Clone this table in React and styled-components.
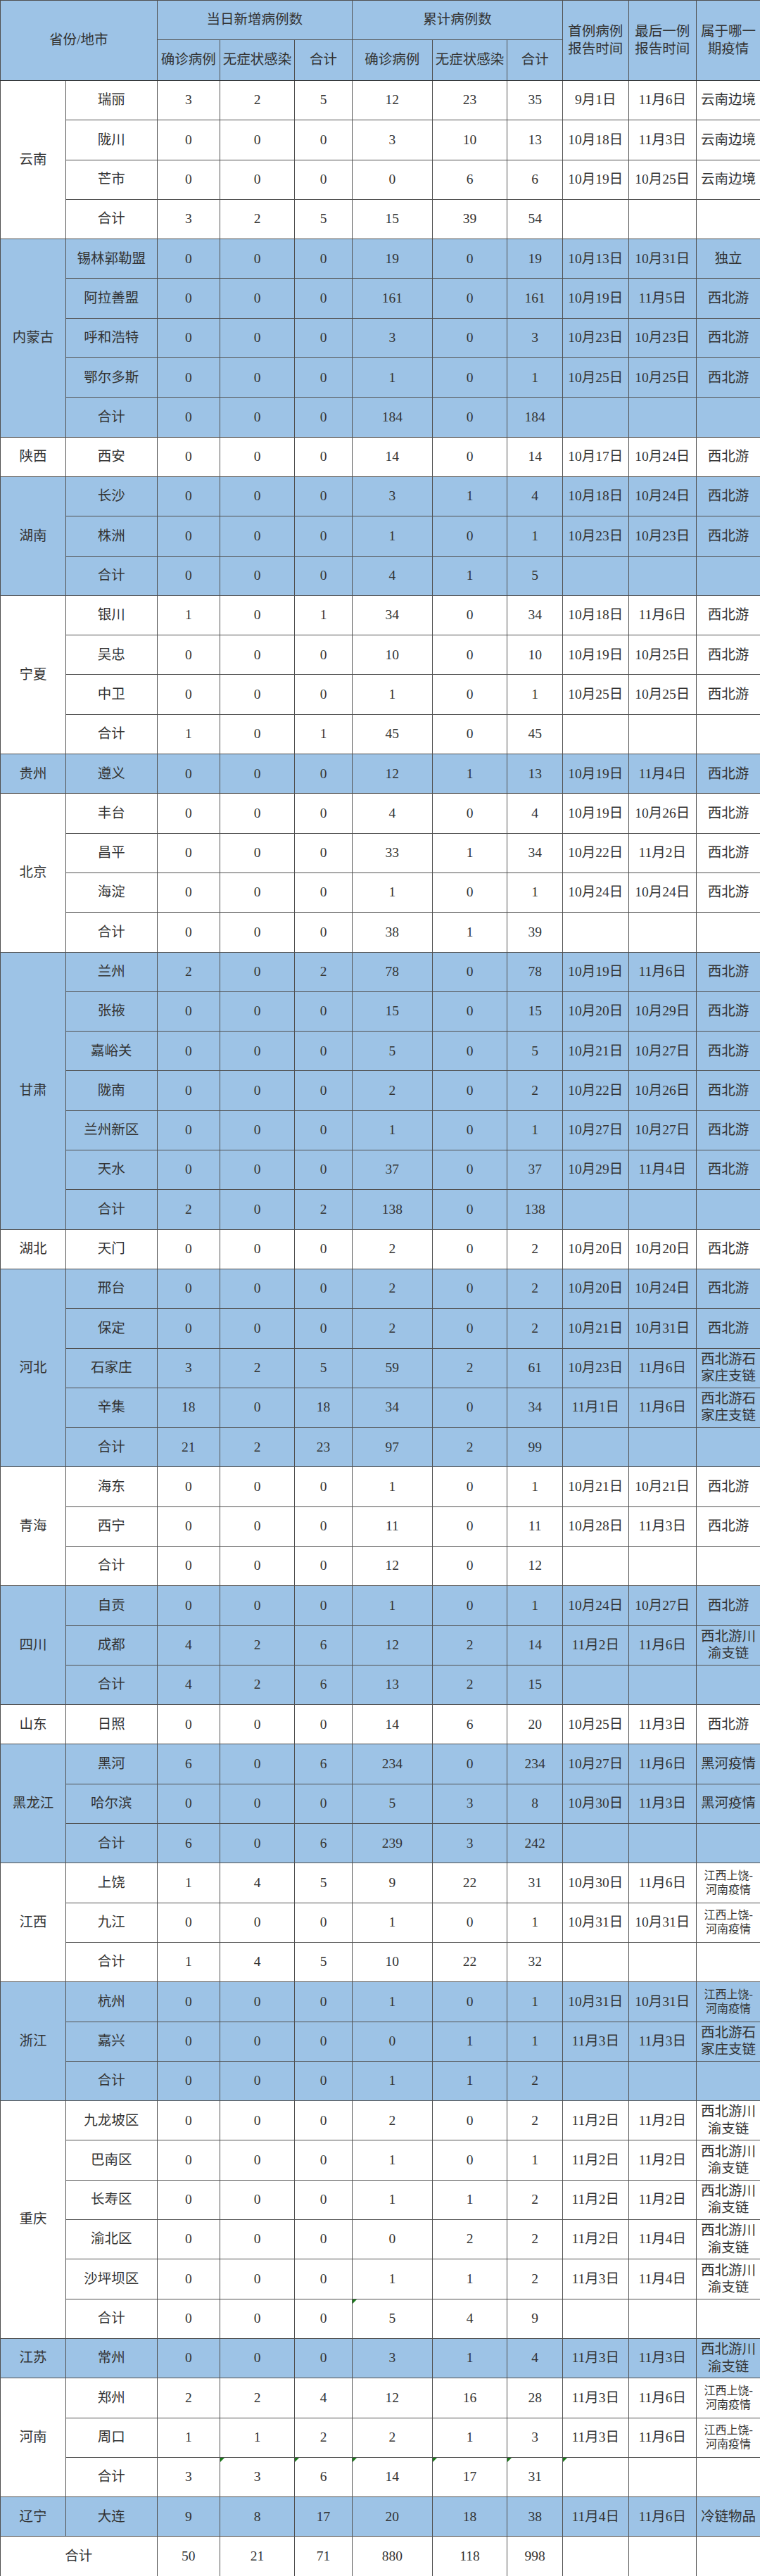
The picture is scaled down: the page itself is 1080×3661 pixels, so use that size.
import React from "react"
import styled, { createGlobalStyle } from "styled-components"

const BLUE = "#9dc3e6"
const LINE = "#505050"
const EDGE = "#2e2e2e"

const GlobalStyle = createGlobalStyle`
    html, body{
        margin: 0;
        padding: 0;
        background: #ffffff;
    }
    body{
        font-family: "Liberation Serif", "Noto Sans CJK SC", serif;
        color: #333333;
    }
`

const Sheet = styled.table`
    width: 1080px;
    table-layout: fixed;
    border-collapse: collapse;
    font-size: 19.5px;
`

const HeadRow = styled.tr`
    height: ${p => p.$h}px;
`

const HeadCell = styled.th`
    background: ${BLUE};
    font-weight: normal;
    border: 1px solid ${LINE};
    border-bottom-color: ${p => p.$last ? EDGE : LINE};
    padding: 0 3px;
    line-height: 1.25;
    text-align: center;
    vertical-align: middle;
`

const Row = styled.tr`
    height: 56.3px;
    background: ${p => p.$tint ? BLUE : "#ffffff"};
`

const Cell = styled.td`
    position: relative;
    border: 1px solid ${LINE};
    border-top-color: ${p => p.$first ? EDGE : LINE};
    padding: 0 3px;
    text-align: center;
    vertical-align: middle;
    line-height: 1.25;
    white-space: pre-line;
    font-size: ${p => p.$small ? "16px" : "inherit"};

    /* Excel style green corner marker */
    &::before{
        content: "";
        display: ${p => p.$flag ? "block" : "none"};
        position: absolute;
        left: 0;
        top: 0;
        border-top: 6px solid #1b7a1b;
        border-right: 6px solid transparent;
    }
`

const widths = [93, 129.5, 89.5, 106, 82, 113.6, 106.8, 78.5, 93.7, 96.4, 91]

const W = "西北游"
const SJZ = "西北游石\n家庄支链"
const CY = "西北游川\n渝支链"
const JX = "江西上饶-\n河南疫情"
const YN = "云南边境"
const HH = "黑河疫情"

const groups = [
    { province: "云南", rows: [
        ["瑞丽", 3, 2, 5, 12, 23, 35, "9月1日", "11月6日", YN],
        ["陇川", 0, 0, 0, 3, 10, 13, "10月18日", "11月3日", YN],
        ["芒市", 0, 0, 0, 0, 6, 6, "10月19日", "10月25日", YN],
        ["合计", 3, 2, 5, 15, 39, 54],
    ]},
    { province: "内蒙古", rows: [
        ["锡林郭勒盟", 0, 0, 0, 19, 0, 19, "10月13日", "10月31日", "独立"],
        ["阿拉善盟", 0, 0, 0, 161, 0, 161, "10月19日", "11月5日", W],
        ["呼和浩特", 0, 0, 0, 3, 0, 3, "10月23日", "10月23日", W],
        ["鄂尔多斯", 0, 0, 0, 1, 0, 1, "10月25日", "10月25日", W],
        ["合计", 0, 0, 0, 184, 0, 184],
    ]},
    { province: "陕西", rows: [
        ["西安", 0, 0, 0, 14, 0, 14, "10月17日", "10月24日", W],
    ]},
    { province: "湖南", rows: [
        ["长沙", 0, 0, 0, 3, 1, 4, "10月18日", "10月24日", W],
        ["株洲", 0, 0, 0, 1, 0, 1, "10月23日", "10月23日", W],
        ["合计", 0, 0, 0, 4, 1, 5],
    ]},
    { province: "宁夏", rows: [
        ["银川", 1, 0, 1, 34, 0, 34, "10月18日", "11月6日", W],
        ["吴忠", 0, 0, 0, 10, 0, 10, "10月19日", "10月25日", W],
        ["中卫", 0, 0, 0, 1, 0, 1, "10月25日", "10月25日", W],
        ["合计", 1, 0, 1, 45, 0, 45],
    ]},
    { province: "贵州", rows: [
        ["遵义", 0, 0, 0, 12, 1, 13, "10月19日", "11月4日", W],
    ]},
    { province: "北京", rows: [
        ["丰台", 0, 0, 0, 4, 0, 4, "10月19日", "10月26日", W],
        ["昌平", 0, 0, 0, 33, 1, 34, "10月22日", "11月2日", W],
        ["海淀", 0, 0, 0, 1, 0, 1, "10月24日", "10月24日", W],
        ["合计", 0, 0, 0, 38, 1, 39],
    ]},
    { province: "甘肃", rows: [
        ["兰州", 2, 0, 2, 78, 0, 78, "10月19日", "11月6日", W],
        ["张掖", 0, 0, 0, 15, 0, 15, "10月20日", "10月29日", W],
        ["嘉峪关", 0, 0, 0, 5, 0, 5, "10月21日", "10月27日", W],
        ["陇南", 0, 0, 0, 2, 0, 2, "10月22日", "10月26日", W],
        ["兰州新区", 0, 0, 0, 1, 0, 1, "10月27日", "10月27日", W],
        ["天水", 0, 0, 0, 37, 0, 37, "10月29日", "11月4日", W],
        ["合计", 2, 0, 2, 138, 0, 138],
    ]},
    { province: "湖北", rows: [
        ["天门", 0, 0, 0, 2, 0, 2, "10月20日", "10月20日", W],
    ]},
    { province: "河北", rows: [
        ["邢台", 0, 0, 0, 2, 0, 2, "10月20日", "10月24日", W],
        ["保定", 0, 0, 0, 2, 0, 2, "10月21日", "10月31日", W],
        ["石家庄", 3, 2, 5, 59, 2, 61, "10月23日", "11月6日", SJZ],
        ["辛集", 18, 0, 18, 34, 0, 34, "11月1日", "11月6日", SJZ],
        ["合计", 21, 2, 23, 97, 2, 99],
    ]},
    { province: "青海", rows: [
        ["海东", 0, 0, 0, 1, 0, 1, "10月21日", "10月21日", W],
        ["西宁", 0, 0, 0, 11, 0, 11, "10月28日", "11月3日", W],
        ["合计", 0, 0, 0, 12, 0, 12],
    ]},
    { province: "四川", rows: [
        ["自贡", 0, 0, 0, 1, 0, 1, "10月24日", "10月27日", W],
        ["成都", 4, 2, 6, 12, 2, 14, "11月2日", "11月6日", CY],
        ["合计", 4, 2, 6, 13, 2, 15],
    ]},
    { province: "山东", rows: [
        ["日照", 0, 0, 0, 14, 6, 20, "10月25日", "11月3日", W],
    ]},
    { province: "黑龙江", rows: [
        ["黑河", 6, 0, 6, 234, 0, 234, "10月27日", "11月6日", HH],
        ["哈尔滨", 0, 0, 0, 5, 3, 8, "10月30日", "11月3日", HH],
        ["合计", 6, 0, 6, 239, 3, 242],
    ]},
    { province: "江西", rows: [
        ["上饶", 1, 4, 5, 9, 22, 31, "10月30日", "11月6日", JX],
        ["九江", 0, 0, 0, 1, 0, 1, "10月31日", "10月31日", JX],
        ["合计", 1, 4, 5, 10, 22, 32],
    ]},
    { province: "浙江", rows: [
        ["杭州", 0, 0, 0, 1, 0, 1, "10月31日", "10月31日", JX],
        ["嘉兴", 0, 0, 0, 0, 1, 1, "11月3日", "11月3日", SJZ],
        ["合计", 0, 0, 0, 1, 1, 2],
    ]},
    { province: "重庆", rows: [
        ["九龙坡区", 0, 0, 0, 2, 0, 2, "11月2日", "11月2日", CY],
        ["巴南区", 0, 0, 0, 1, 0, 1, "11月2日", "11月2日", CY],
        ["长寿区", 0, 0, 0, 1, 1, 2, "11月2日", "11月2日", CY],
        ["渝北区", 0, 0, 0, 0, 2, 2, "11月2日", "11月4日", CY],
        ["沙坪坝区", 0, 0, 0, 1, 1, 2, "11月3日", "11月4日", CY],
        ["合计", 0, 0, 0, 5, 4, 9],
    ], flags: { 5: [3] }},
    { province: "江苏", rows: [
        ["常州", 0, 0, 0, 3, 1, 4, "11月3日", "11月3日", CY],
    ]},
    { province: "河南", rows: [
        ["郑州", 2, 2, 4, 12, 16, 28, "11月3日", "11月6日", JX],
        ["周口", 1, 1, 2, 2, 1, 3, "11月3日", "11月6日", JX],
        ["合计", 3, 3, 6, 14, 17, 31],
    ], flags: { 2: [1, 2, 3, 4, 5, 6] }},
    { province: "辽宁", rows: [
        ["大连", 9, 8, 17, 20, 18, 38, "11月4日", "11月6日", "冷链物品"],
    ]},
]

const totals = [50, 21, 71, 880, 118, 998]

const Header = () =>
    <thead>
        <HeadRow $h={56}>
            <HeadCell colSpan={2} rowSpan={2} $last>省份/地市</HeadCell>
            <HeadCell colSpan={3}>当日新增病例数</HeadCell>
            <HeadCell colSpan={3}>累计病例数</HeadCell>
            <HeadCell rowSpan={2} $last>首例病例报告时间</HeadCell>
            <HeadCell rowSpan={2} $last>最后一例报告时间</HeadCell>
            <HeadCell rowSpan={2} $last>属于哪一期疫情</HeadCell>
        </HeadRow>
        <HeadRow $h={58}>
            {["确诊病例", "无症状感染", "合计", "确诊病例", "无症状感染", "合计"].map((t, i) =>
                <HeadCell key={i} $last>{t}</HeadCell>
            )}
        </HeadRow>
    </thead>

const ProvinceGroup = ({ group, tint }) =>
    group.rows.map((row, r) => {
        const [city, ...rest] = row
        const flagged = (group.flags && group.flags[r]) || []
        const values = rest.length === 6 ? [...rest, "", "", ""] : rest
        return (
            <Row key={city + r} $tint={tint}>
                {r === 0 && <Cell rowSpan={group.rows.length} $first>{group.province}</Cell>}
                <Cell $first={r === 0}>{city}</Cell>
                {values.map((v, i) =>
                    <Cell
                        key={i}
                        $first={r === 0}
                        $flag={flagged.includes(i)}
                        $small={typeof v === "string" && v.startsWith("江西上饶")}
                    >{v}</Cell>
                )}
            </Row>
        )
    })

const App = () =>
    <>
        <GlobalStyle />
        <Sheet>
            <colgroup>
                {widths.map((w, i) => <col key={i} style={{ width: w }} />)}
            </colgroup>
            <Header />
            <tbody>
                {groups.map((g, i) =>
                    <ProvinceGroup key={g.province} group={g} tint={i % 2 === 1} />
                )}
                <Row>
                    <Cell colSpan={2} $first>合计</Cell>
                    {[...totals, "", "", ""].map((v, i) => <Cell key={i} $first>{v}</Cell>)}
                </Row>
            </tbody>
        </Sheet>
    </>

export default App
